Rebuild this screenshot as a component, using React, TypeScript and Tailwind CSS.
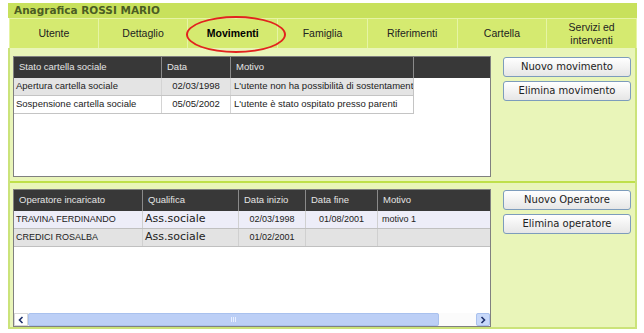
import React from "react";

const tabs = [
  "Utente",
  "Dettaglio",
  "Movimenti",
  "Famiglia",
  "Riferimenti",
  "Cartella",
  "Servizi ed interventi",
];

const movimenti = [
  {
    stato: "Apertura cartella sociale",
    data: "02/03/1998",
    motivo: "L'utente non ha possibilità di sostentamento",
    bg: "bg-[#e4e4e4]",
  },
  {
    stato: "Sospensione cartella sociale",
    data: "05/05/2002",
    motivo: "L'utente è stato ospitato presso parenti",
    bg: "bg-white",
  },
];

const operatori = [
  {
    nome: "TRAVINA FERDINANDO",
    qualifica: "Ass.sociale",
    inizio: "02/03/1998",
    fine: "01/08/2001",
    motivo: "motivo 1",
    bg: "bg-[#ededf8]",
  },
  {
    nome: "CREDICI ROSALBA",
    qualifica: "Ass.sociale",
    inizio: "01/02/2001",
    fine: "",
    motivo: "",
    bg: "bg-[#e3e3e3]",
  },
];

function Bottone({ label }: { label: string }) {
  return (
    <button
      type="button"
      className="h-[20px] w-[128px] rounded-[3px] border border-[#7d9cbc] bg-linear-to-b from-white to-[#e6e6e6] font-['DejaVu_Sans',sans-serif] text-[10px] leading-none text-[#222]"
    >
      {label}
    </button>
  );
}

function HeaderCell({
  label,
  className,
}: {
  label: string;
  className: string;
}) {
  return (
    <div
      className={`flex items-center border-r border-[#8a8a8a] pl-[5px] text-[9.5px] text-[#e4e4e4] ${className}`}
    >
      {label}
    </div>
  );
}

export default function App() {
  return (
    <div className="h-[333px] w-[644px] overflow-hidden bg-white pl-[8px] pt-[3px] font-['Liberation_Sans',Arial,sans-serif]">
      <div className="flex w-[629px] flex-col">
        {/* Titolo */}
        <div className="h-[15px] bg-[#c8e15c] pl-[6px] font-['DejaVu_Sans',sans-serif] text-[10.5px] font-bold leading-[15px] text-[#4b5d23]">
          Anagrafica ROSSI MARIO
        </div>

        {/* Tabs */}
        <div className="relative ml-[1px] grid h-[30px] grid-cols-7 border-t border-[#e6f4a4] bg-[#d5ea70]">
          {tabs.map((t) => (
            <div
              key={t}
              className={`flex items-center justify-center border-r border-[#e6f4a4] px-1 text-center text-[10.5px] leading-[13px] text-[#222] ${
                t === "Movimenti" ? "font-bold text-black" : ""
              } ${t === "Utente" ? "border-l" : ""}`}
            >
              {t === "Servizi ed interventi" ? (
                <span>
                  Servizi ed
                  <br />
                  interventi
                </span>
              ) : (
                t
              )}
            </div>
          ))}
          <div className="pointer-events-none absolute left-[177px] top-[-3px] h-[37px] w-[100px] rounded-[50%] border-2 border-[#e2231e]" />
        </div>

        {/* Corpo */}
        <div className="flex h-[281px] flex-col border-x-2 border-b-2 border-[#cbe37a] bg-[#e9f5b9]">
          {/* Movimenti */}
          <div className="flex h-[133px] pl-[3px]">
            <div className="mt-[8px] flex h-[121px] w-[478px] flex-col border border-[#808080] bg-white">
              <div className="flex h-[21px] bg-[#383838]">
                <HeaderCell label="Stato cartella sociale" className="w-[148px]" />
                <HeaderCell label="Data" className="w-[69px]" />
                <HeaderCell label="Motivo" className="w-[183px]" />
                <div className="flex-1" />
              </div>
              {movimenti.map((m) => (
                <div
                  key={m.stato}
                  className={`flex h-[18px] w-[400px] border-b border-[#c4c4c4] text-[9.5px] text-[#222] ${m.bg}`}
                >
                  <div className="flex w-[148px] items-center border-r border-[#d4d4d4] pl-[2px]">
                    {m.stato}
                  </div>
                  <div className="flex w-[69px] items-center justify-center border-r border-[#d4d4d4]">
                    {m.data}
                  </div>
                  <div className="flex w-[183px] items-center overflow-hidden whitespace-nowrap border-r border-[#c4c4c4] pl-[3px]">
                    {m.motivo}
                  </div>
                </div>
              ))}
            </div>
            <div className="ml-[12px] mt-[9px] flex flex-col gap-[4px]">
              <Bottone label="Nuovo movimento" />
              <Bottone label="Elimina movimento" />
            </div>
          </div>

          <div className="h-[2px] bg-[#bfe04a]" />

          {/* Operatori */}
          <div className="flex flex-1 pl-[3px]">
            <div className="mt-[6px] flex w-[478px] flex-col border border-[#808080] bg-white">
              <div className="flex h-[21px] bg-[#383838]">
                <HeaderCell label="Operatore incaricato" className="w-[129px]" />
                <HeaderCell label="Qualifica" className="w-[96px]" />
                <HeaderCell label="Data inizio" className="w-[67px]" />
                <HeaderCell label="Data fine" className="w-[72px]" />
                <div className="flex flex-1 items-center pl-[5px] text-[9.5px] text-[#e4e4e4]">
                  Motivo
                </div>
              </div>
              {operatori.map((o) => (
                <div
                  key={o.nome}
                  className={`flex h-[18px] border-b border-[#c0c0c0] text-[9px] text-[#222] ${o.bg}`}
                >
                  <div className="flex w-[129px] items-center border-r border-[#d0d0d0] pl-[2px]">
                    {o.nome}
                  </div>
                  <div className="flex w-[96px] items-center border-r border-[#d0d0d0] pl-[2px] font-['DejaVu_Sans',sans-serif] text-[11px]">
                    {o.qualifica}
                  </div>
                  <div className="flex w-[67px] items-center justify-center border-r border-[#d0d0d0]">
                    {o.inizio}
                  </div>
                  <div className="flex w-[72px] items-center justify-center border-r border-[#d0d0d0]">
                    {o.fine}
                  </div>
                  <div className="flex flex-1 items-center pl-[4px]">{o.motivo}</div>
                </div>
              ))}
              <div className="flex-1" />
              {/* Scrollbar orizzontale */}
              <div className="flex h-[13px] items-stretch bg-[#f4f4f4]">
                <div className="flex w-[14px] items-center justify-center border border-[#d8d8d8] bg-white">
                  <svg width="6" height="8" viewBox="0 0 6 8">
                    <path d="M4.5 1 L1.5 4 L4.5 7" fill="none" stroke="#1d2f6a" strokeWidth="1.6" />
                  </svg>
                </div>
                <div className="flex w-[411px] items-center justify-center rounded-[2px] border border-[#a9c1ee] bg-[#bccff6]">
                  <div className="flex gap-[1px]">
                    <div className="h-[5px] w-[1px] bg-[#e8efff]" />
                    <div className="h-[5px] w-[1px] bg-[#e8efff]" />
                    <div className="h-[5px] w-[1px] bg-[#e8efff]" />
                  </div>
                </div>
                <div className="flex-1 bg-[#fbfbfb]" />
                <div className="flex w-[14px] items-center justify-center rounded-[2px] border border-[#a9c1ee] bg-[#c8d9fa]">
                  <svg width="6" height="8" viewBox="0 0 6 8">
                    <path d="M1.5 1 L4.5 4 L1.5 7" fill="none" stroke="#1d2f6a" strokeWidth="1.6" />
                  </svg>
                </div>
              </div>
            </div>
            <div className="ml-[12px] mt-[7px] flex flex-col gap-[4px]">
              <Bottone label="Nuovo Operatore" />
              <Bottone label="Elimina operatore" />
            </div>
          </div>
        </div>
      </div>
    </div>
  );
}
